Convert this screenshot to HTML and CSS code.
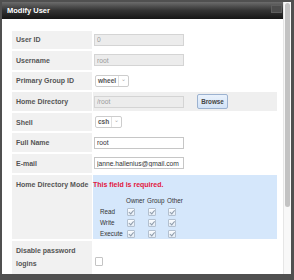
FILE: index.html
```html
<!DOCTYPE html>
<html>
<head>
    <link rel="stylesheet" href="styles.css">
</head>
<body>

    <div class="frame">
        <div class="dialog">
            <div class="titlebar">
                <span class="title">Modify User</span>
                <span class="close"></span>
            </div>

            <div class="content">
                <div class="form">
                    <div class="label">User ID</div>
                    <div class="value"><input class="field" type="text" value="0" disabled></div>

                    <div class="label">Username</div>
                    <div class="value"><input class="field" type="text" value="root" disabled></div>

                    <div class="label">Primary Group ID</div>
                    <div class="value">
                        <span class="select"><span class="opt">wheel</span><span class="arrow">&#8964;</span></span>
                    </div>

                    <div class="label shaded">Home Directory</div>
                    <div class="value shaded">
                        <input class="field" type="text" value="/root" disabled>
                        <button class="btn">Browse</button>
                    </div>

                    <div class="label">Shell</div>
                    <div class="value">
                        <span class="select"><span class="opt">csh</span><span class="arrow">&#8964;</span></span>
                    </div>

                    <div class="label">Full Name</div>
                    <div class="value"><input class="field" type="text" value="root"></div>

                    <div class="label">E-mail</div>
                    <div class="value"><input class="field" type="text" value="janne.hallenius@gmail.com"></div>

                    <div class="label top">Home Directory Mode</div>
                    <div class="value mode">
                        <div class="error">This field is required.</div>
                        <div class="perms">
                            <span></span><span>Owner</span><span>Group</span><span>Other</span>
                            <span>Read</span><span class="check on"></span><span class="check on"></span><span class="check on"></span>
                            <span>Write</span><span class="check on"></span><span class="check on"></span><span class="check on"></span>
                            <span>Execute</span><span class="check on"></span><span class="check on"></span><span class="check on"></span>
                        </div>
                    </div>

                    <div class="label top wrap">Disable password logins</div>
                    <div class="value"><span class="check empty"></span></div>
                </div>
            </div>
        </div>

        <div class="scrollbar"><div class="thumb"></div></div>
    </div>

</body>
</html>
```

FILE: styles.css
```css
body {
    margin: 0;
    background-color: #505050;
    font-family: "Liberation Sans", Arial, sans-serif;
    font-size: 7px;
    color: #333;
}
.frame {
    display: flex;
    height: 280px;
    box-sizing: border-box;
    padding: 2px 3px 6px 2px;
}
.dialog {
    flex: 1;
    display: flex;
    flex-direction: column;
    background-color: #fff;
    overflow: hidden;
}
.titlebar {
    height: 17px;
    flex-shrink: 0;
    display: flex;
    align-items: center;
    justify-content: space-between;
    padding: 0 1px 0 5px;
    background: linear-gradient(#6c6c6c, #333 50%, #161616);
}
.title {
    color: #fff;
    font-weight: bold;
    font-size: 7.5px;
}
.close {
    width: 9px;
    height: 6px;
    margin-top: -3px;
    background-color: #4c4c4c;
    border: 1px solid #5e5e5e;
}
.content {
    padding: 11.5px 6px 0 10px;
}
.form {
    display: grid;
    grid-template-columns: 80px 184px;
    grid-template-rows: repeat(7, 18.6px) 64.5px 40px;
    column-gap: 1px;
    row-gap: 2px;
}
.label {
    background-color: #f1f1f1;
    color: #555;
    font-weight: bold;
    padding-left: 4px;
    display: flex;
    align-items: center;
}
.label.top {
    align-items: flex-start;
    padding-top: 6px;
}
.label.wrap {
    padding-top: 3px;
    line-height: 13px;
    padding-right: 4px;
}
.value {
    display: flex;
    align-items: center;
    padding-left: 1px;
}
.shaded {
    background-color: #efefef;
}
.field {
    width: 90px;
    height: 12px;
    box-sizing: border-box;
    margin: 0;
    padding: 0 1px 0 2px;
    border: 1px solid #c6c6c6;
    border-radius: 0;
    background-color: #fff;
    font-family: "Liberation Sans", Arial, sans-serif;
    font-size: 6.7px;
    color: #333;
}
.field:disabled {
    background-color: #ececec;
    border-color: #d4d4d4;
    color: #9a9a9a;
}
.btn {
    margin-left: 13px;
    width: 31px;
    height: 15px;
    padding: 0;
    background: linear-gradient(#eaf2fc, #d3e3f7);
    border: 1px solid #9cb2d0;
    border-radius: 2px;
    font-family: "Liberation Sans", Arial, sans-serif;
    font-size: 6.3px;
    font-weight: bold;
    color: #444;
}
.select {
    display: flex;
    align-items: center;
    height: 12px;
    box-sizing: border-box;
    margin-left: 1px;
    border: 1px solid #cdcdcd;
    border-radius: 2px;
    background-color: #fff;
}
.opt {
    font-weight: bold;
    font-size: 6.5px;
    color: #555;
    padding: 0 2px;
    border-right: 1px solid #e0e0e0;
    line-height: 10px;
}
.arrow {
    color: #aaa;
    font-size: 6px;
    padding: 0 2px 3px;
    line-height: 7px;
}
.value.mode {
    display: block;
    padding: 5px 0 0 0;
    background-color: #d5e7fb;
}
.error {
    color: #e2163c;
    font-weight: bold;
    line-height: 10px;
}
.perms {
    display: grid;
    grid-template-columns: 26px 21px 20px 21px;
    grid-auto-rows: 11px;
    align-items: center;
    margin: 5.5px 0 0 7px;
    font-size: 6.3px;
    color: #333;
}
.check {
    position: relative;
    width: 6px;
    height: 6px;
    margin-left: 1px;
    border: 1px solid #b3c0cf;
    border-radius: 1px;
    background: linear-gradient(#fbfdff, #e4ecf5);
}
.check.on::after {
    content: "";
    position: absolute;
    left: 2px;
    top: 0;
    width: 1.5px;
    height: 3.5px;
    border-right: 1px solid #8e9bab;
    border-bottom: 1px solid #8e9bab;
    transform: rotate(40deg);
}
.check.empty {
    width: 6px;
    height: 7px;
    border-color: #c4c4c4;
    background: #fff;
}
.scrollbar {
    width: 8px;
    box-sizing: border-box;
    background-color: #f8f8f8;
    border-left: 1px solid #e6e6e6;
    padding: 1px 1px 0 1px;
}
.thumb {
    height: 204px;
    background-color: #c3c3c3;
    border-radius: 3px;
}
```
